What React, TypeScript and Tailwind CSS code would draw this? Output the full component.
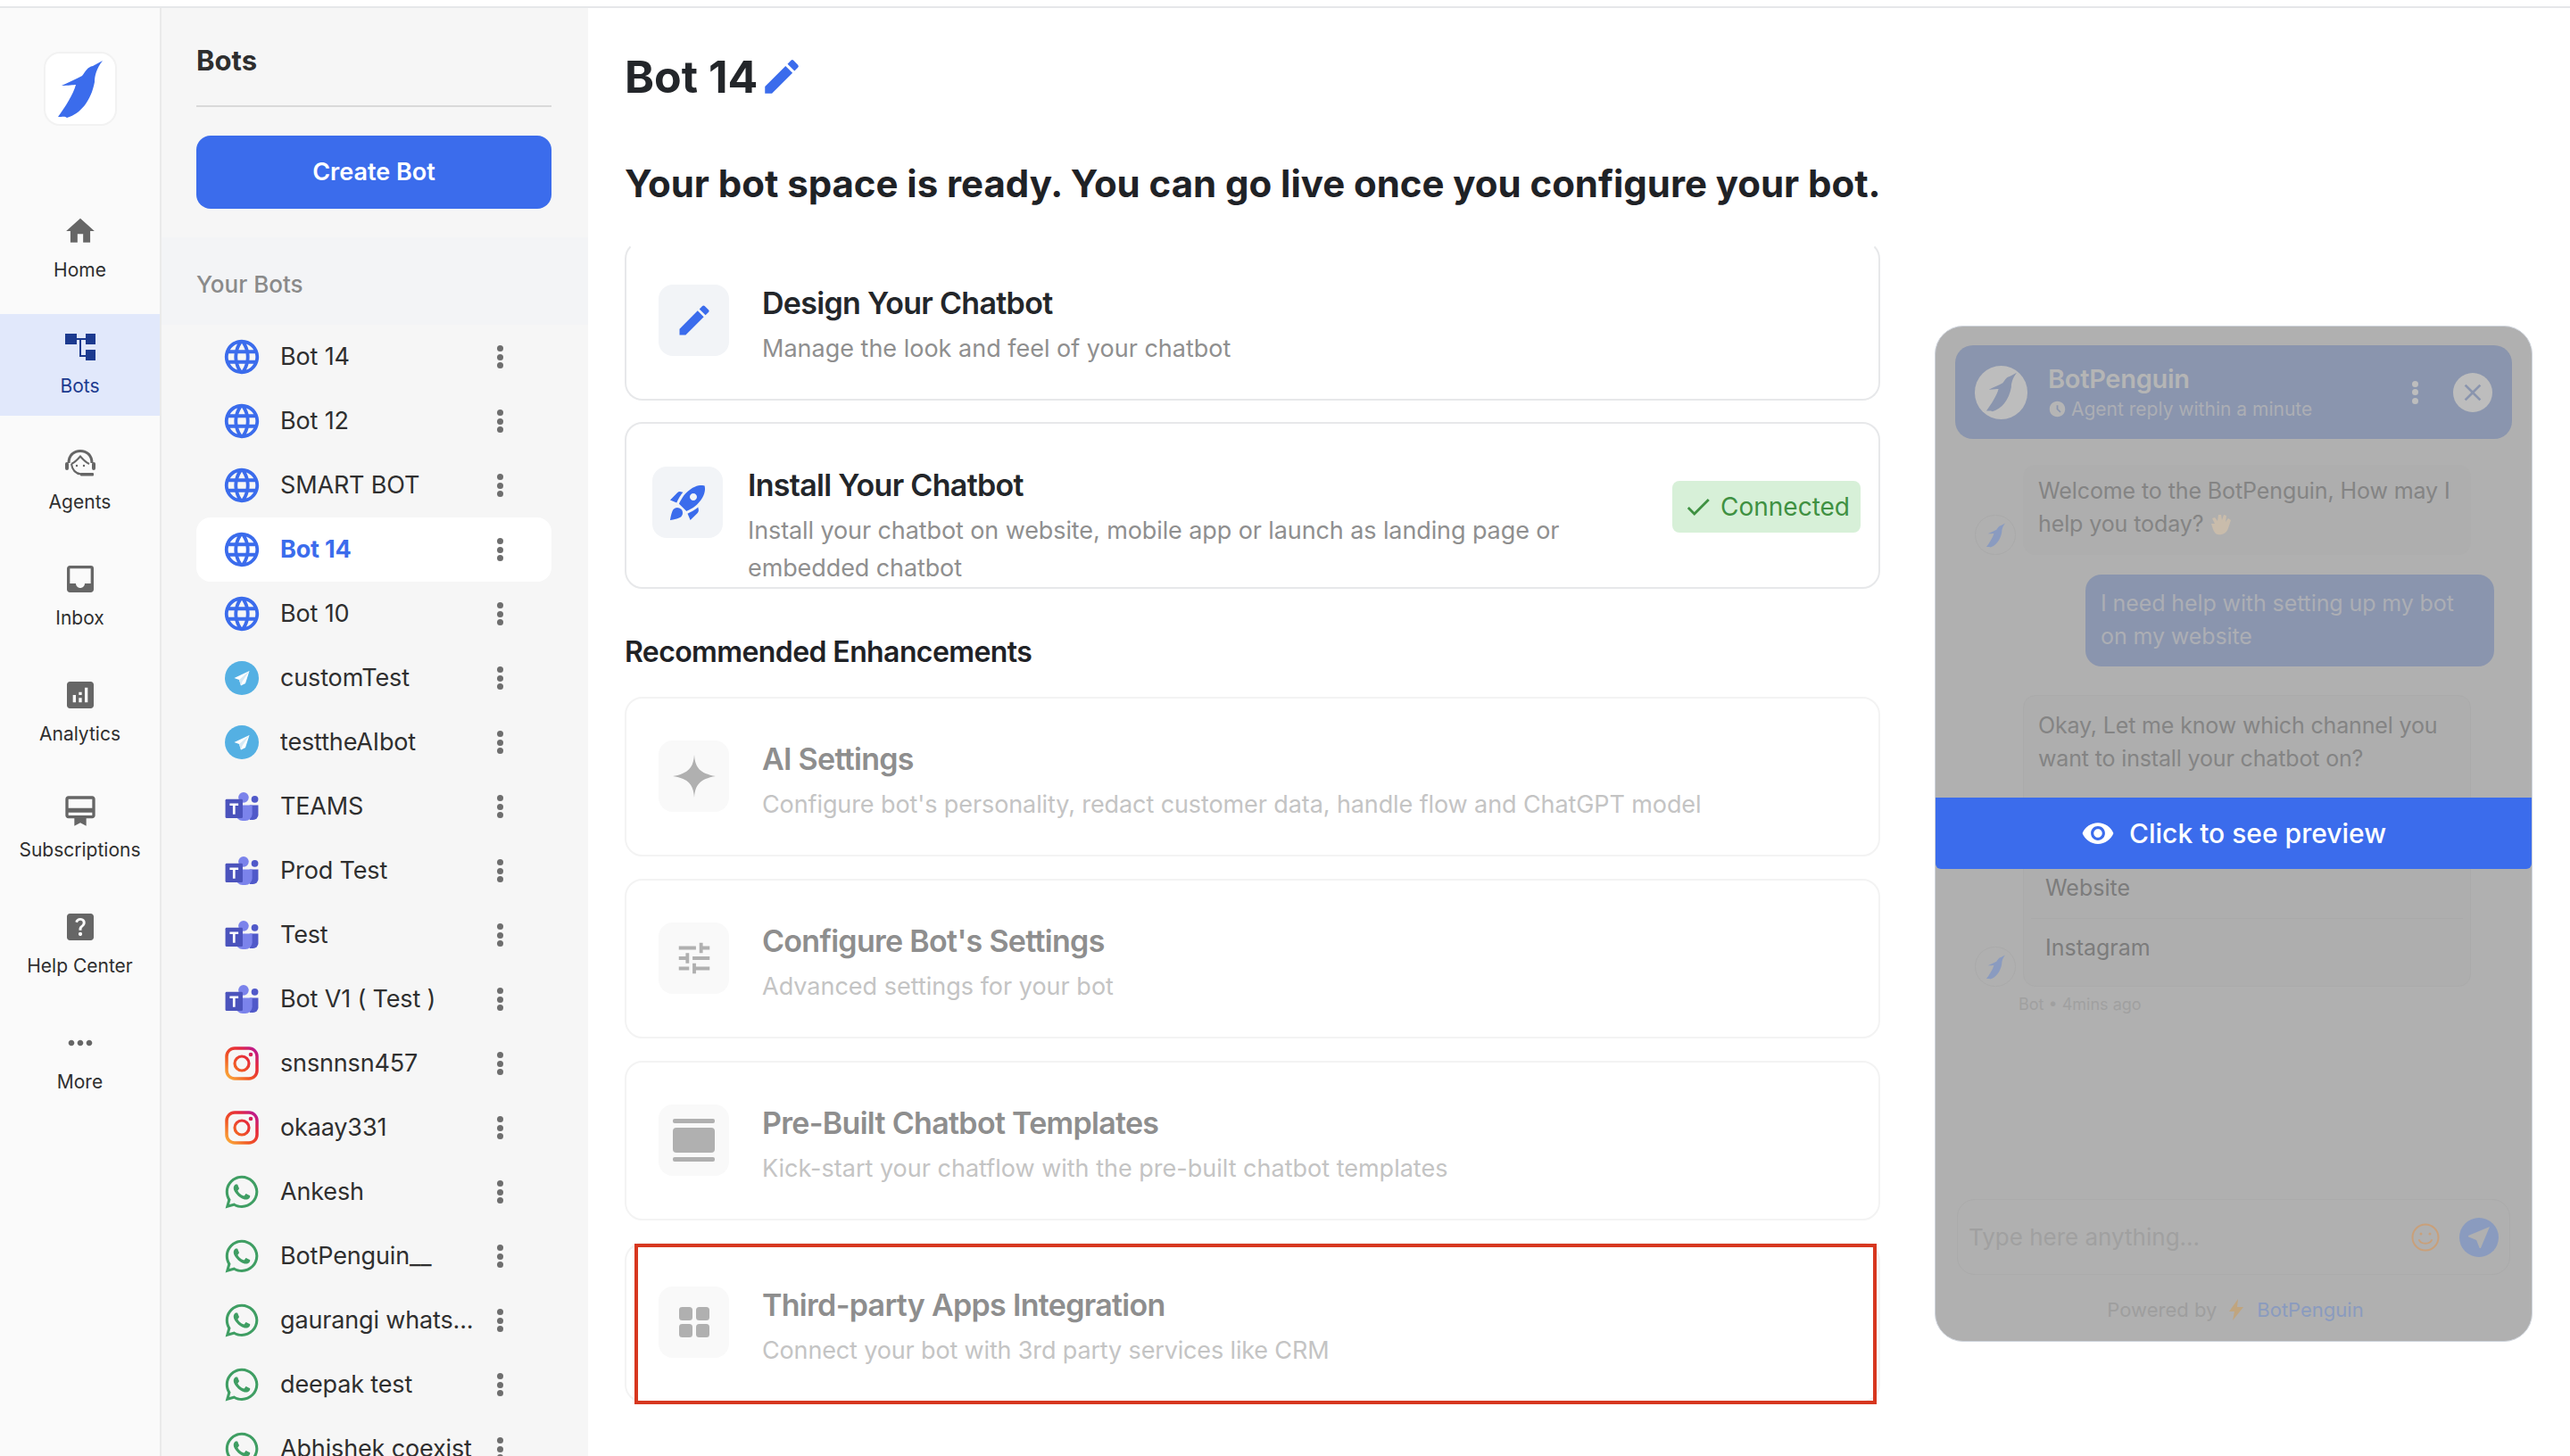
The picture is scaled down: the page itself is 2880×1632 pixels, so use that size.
import React from "react";
import {
  MdHome, MdInbox, MdAnalytics, MdCardMembership, MdHelpCenter, MdMoreHoriz, MdEdit, MdRocketLaunch,
  MdLanguage, MdTune, MdCheck, MdVisibility, MdAccessTimeFilled, MdNearMe, MdClose,
} from "react-icons/md";
import { FaWhatsapp } from "react-icons/fa";

const PENGUIN = "M50 0 L39 6 C33 7 31 12 27 17 C20 21 12 24 4 28 C12 28 17 27 20 27 C17 38 8 52 0 63 C5 63 8 62 10 64 C25 60 37 45 41 24 C41 17 43 9 50 0 Z";

function Penguin({ className, fill }: { className: string; fill: string }) {
  return (
    <svg viewBox="0 0 50 64" className={className}>
      <path d={PENGUIN} fill={fill} />
    </svg>
  );
}

function Dots({ className }: { className: string }) {
  return (
    <div className="flex flex-col items-center gap-[2.5px]">
      <span className={className} />
      <span className={className} />
      <span className={className} />
    </div>
  );
}

function BotsIcon() {
  return (
    <svg viewBox="0 0 34 30" className="h-[30px] w-[34px]" fill="#1c3a8f">
      <rect x="0" y="0" width="13" height="12" />
      <rect x="23" y="0" width="11" height="12" />
      <rect x="23" y="18" width="11" height="12" />
      <path d="M13 5h10v2H13zM16 5h2v19h5v2h-7z" />
    </svg>
  );
}

function AgentsIcon() {
  return (
    <svg viewBox="0 0 34 30" className="h-[30px] w-[34px]" fill="none" stroke="#666">
      <path d="M4 15C4 6 10 1.500 17 1.500S30 6 30 15" strokeWidth="3" />
      <path d="M7 16C11 14 14 11 17 7.500C20 11 23 14 27 16" strokeWidth="2" />
      <path d="M7 16C8 23 12 27 18 27.500" strokeWidth="2" />
      <rect x="0" y="14" width="4" height="9" rx="2" fill="#666" stroke="none" />
      <rect x="30" y="14" width="4" height="9" rx="2" fill="#666" stroke="none" />
      <rect x="17" y="26" width="15" height="3.500" rx="1" fill="#666" stroke="none" />
      <circle cx="13" cy="18" r="1.200" fill="#666" stroke="none" />
      <circle cx="21" cy="18" r="1.200" fill="#666" stroke="none" />
    </svg>
  );
}

function Telegram() {
  return (
    <svg viewBox="0 0 38 38" className="h-[38px] w-[38px]">
      <circle cx="19" cy="19" r="19" fill="#54b0e3" />
      <path d="M27.500 11 L10.500 19 L16 21 L18 27.500 L23 25 Z" fill="#fff" />
      <path d="M27.500 11 L16 21 L18 27.500 L19.500 23 Z" fill="#d5e9f5" />
    </svg>
  );
}

function Teams() {
  return (
    <svg viewBox="0 0 38 34" className="h-[33px] w-[38px]">
      <circle cx="34" cy="8" r="4" fill="#5059c9" />
      <path d="M28 15h10v11a6 6 0 0 1-6 6h-4z" fill="#5059c9" />
      <circle cx="21" cy="6" r="6" fill="#7b83eb" />
      <path d="M12 15h19v10a8 8 0 0 1-8 8 h-3a8 8 0 0 1-8-8z" fill="#7b83eb" />
      <rect x="0" y="8" width="20" height="22" rx="1.500" fill="#4b53bc" />
      <path d="M5 13h10v2.500h-3.600v10h-2.800v-10H5z" fill="#fff" />
    </svg>
  );
}

function Instagram() {
  return (
    <svg viewBox="0 0 38 38" className="h-[38px] w-[38px]">
      <defs>
        <linearGradient id="ig" gradientUnits="userSpaceOnUse" x1="2" y1="36" x2="36" y2="2">
          <stop offset="0" stopColor="#fbb03b" />
          <stop offset="0.35" stopColor="#f15a24" />
          <stop offset="0.7" stopColor="#e5283b" />
          <stop offset="1" stopColor="#b5179e" />
        </linearGradient>
      </defs>
      <rect x="2" y="2" width="34" height="34" rx="9" fill="none" stroke="url(#ig)" strokeWidth="3.500" />
      <circle cx="19" cy="19" r="8" fill="none" stroke="url(#ig)" strokeWidth="3.200" />
      <circle cx="29" cy="9" r="2.300" fill="url(#ig)" />
    </svg>
  );
}

function ChannelIcon({ kind }: { kind: string }) {
  if (kind === "web") return <MdLanguage size={46} color="#3b6cec" className="shrink-0" />;
  if (kind === "tg") return <Telegram />;
  if (kind === "teams") return <Teams />;
  if (kind === "ig") return <Instagram />;
  return <FaWhatsapp size={42} color="#3f9e63" className="shrink-0" />;
}

const nav = [
  { label: "Home", icon: <MdHome size={38} color="#666" /> },
  { label: "Bots", icon: <BotsIcon />, active: true },
  { label: "Agents", icon: <AgentsIcon /> },
  { label: "Inbox", icon: <MdInbox size={40} color="#666" /> },
  { label: "Analytics", icon: <MdAnalytics size={40} color="#666" /> },
  { label: "Subscriptions", icon: <MdCardMembership size={40} color="#666" /> },
  { label: "Help Center", icon: <MdHelpCenter size={40} color="#666" /> },
  { label: "More", icon: <MdMoreHoriz size={40} color="#666" /> },
];

const bots = [
  ["Bot 14", "web"], ["Bot 12", "web"], ["SMART BOT", "web"], ["Bot 14", "web", "active"], ["Bot 10", "web"],
  ["customTest", "tg"], ["testtheAIbot", "tg"], ["TEAMS", "teams"], ["Prod Test", "teams"], ["Test", "teams"],
  ["Bot V1 ( Test )", "teams"], ["snsnnsn457", "ig"], ["okaay331", "ig"], ["Ankesh", "wa"], ["BotPenguin__", "wa"],
  ["gaurangi whats...", "wa"], ["deepak test", "wa"], ["Abhishek coexist", "wa"],
];

function Tile({ children, muted, className }: { children: React.ReactNode; muted?: boolean; className?: string }) {
  return (
    <div className={`flex h-20 w-[79px] shrink-0 items-center justify-center rounded-2xl ${muted ? "bg-[#f9f9f9]" : "bg-[#f2f4f7]"} ${className ?? ""}`}>
      {children}
    </div>
  );
}

function Enhancement({ icon, title, sub, subClass, children }: { icon: React.ReactNode; title: string; sub: string; subClass?: string; children?: React.ReactNode }) {
  return (
    <div className="relative flex h-[179px] gap-[37px] rounded-[20px] border-2 border-[#f3f3f3] pl-[36px] pt-[47px]">
      <Tile muted>{icon}</Tile>
      <div>
        <div className="h-[42px] text-[34px] font-semibold leading-[42px] tracking-[-0.7px] text-[#8e8e8e]">{title}</div>
        <div className={`mt-[9px] h-[42px] text-[27px] leading-[42px] text-[#c4c4c4] ${subClass ?? ""}`}>{sub}</div>
      </div>
      {children}
    </div>
  );
}

function Option({ label }: { label: string }) {
  return <div className="flex h-[66px] items-center pl-[24px] text-[25px] text-[#7c7c7c]">{label}</div>;
}

function MiniAvatar() {
  return (
    <div className="flex h-[45px] w-[46px] shrink-0 items-center justify-center rounded-full border border-[#aaaaaa]">
      <Penguin className="h-[28px] w-[21px]" fill="#8a9bc0" />
    </div>
  );
}

export default function App() {
  return (
    <div className="flex h-[1632px] w-[2880px] flex-col overflow-hidden bg-white font-['Inter',sans-serif] text-[#2f2f2f]">
      <div className="h-[9px] shrink-0 border-b-2 border-[#e6e7e9]" />
      <div className="flex min-h-0 flex-1">
        <aside className="w-[181px] shrink-0 border-r-[2px] border-[#eaeaea] bg-[#fafafa] pt-[49px]">
          <div className="ml-[49px] flex h-[83px] w-[82px] items-center justify-center rounded-[18px] border-2 border-[#f2f2f2] bg-white">
            <Penguin className="h-[64px] w-[50px]" fill="#3b6cec" />
          </div>
          <nav className="mt-[81px] flex flex-col gap-4">
            {nav.map((n) => (
              <div key={n.label} className={`flex h-[114px] flex-col items-center pt-[17px] ${n.active ? "bg-[#e1e8fb] text-[#1c3a8f]" : ""}`}>
                <div className="flex h-10 items-center justify-center">{n.icon}</div>
                <div className="mt-[10px] whitespace-nowrap text-[21px] leading-7">{n.label}</div>
              </div>
            ))}
          </nav>
        </aside>

        <section className="w-[478px] shrink-0 overflow-hidden bg-[#f6f6f6]">
          <div className="pl-[39px] pr-[41px] pt-[39px]">
            <div className="h-10 text-[31px] font-bold leading-10 text-[#2e2e2e]">Bots</div>
            <div className="mt-[30px] h-0.5 bg-[#d9d9d9]" />
            <button className="mt-8 flex h-[82px] w-full items-center justify-center rounded-2xl bg-[#3b6cec] text-[27px] font-semibold text-white">Create Bot</button>
          </div>
          <div className="mt-8 h-[98px] bg-[#f3f4f6] pl-[39px] pt-[37px] text-[26px] font-medium leading-8 text-[#8a8a8a]">Your Bots</div>
          <div className="mr-[41px] ml-[39px]">
            {bots.map(([name, kind, active], i) => (
              <div key={i} className={`flex h-[72px] items-center rounded-2xl pl-[32px] pr-[46px] ${active ? "bg-white" : ""}`}>
                <div className="flex h-[46px] w-[38px] shrink-0 items-center justify-center">
                  <ChannelIcon kind={kind} />
                </div>
                <div className={`ml-6 flex-1 whitespace-nowrap text-[27px] tracking-[-0.15px] ${active ? "font-bold text-[#3b6cec]" : ""}`}>{name}</div>
                <div className="flex w-6 justify-center">
                  <Dots className="h-[7px] w-[7px] rounded-full bg-[#6e6e6e]" />
                </div>
              </div>
            ))}
          </div>
        </section>

        <main className="w-[1448px] shrink-0 pl-[41px] pt-[47px]">
          <div className="flex h-[60px] items-center gap-[2px]">
            <span className="text-[50px] font-bold leading-[60px] text-[#23262a]">Bot 14</span>
            <MdEdit size={50} color="#3b6cec" />
          </div>
          <h1 className="mt-[62px] h-14 whitespace-nowrap text-[42px] font-bold leading-[56px] tracking-[-0.05px] text-[#1f2226]">Your bot space is ready. You can go live once you configure your bot.</h1>
          <div className="mt-[36px] flex h-[179px] gap-[37px] rounded-[20px] border-2 border-[#e7e8ea] border-t-transparent pl-[36px] pt-[47px]">
            <Tile><MdEdit size={44} color="#3b6cec" /></Tile>
            <div>
              <div className="h-[42px] text-[34px] font-semibold leading-[42px] tracking-[-0.7px] text-[#23262a]">Design Your Chatbot</div>
              <div className="mt-[9px] h-[42px] text-[27px] leading-[42px] text-[#8f8f8f]">Manage the look and feel of your chatbot</div>
            </div>
          </div>
          <div className="mt-6 flex h-[187px] overflow-hidden rounded-[20px] border-2 border-[#e7e8ea] pl-[29px] pt-[48px]">
            <Tile><MdRocketLaunch size={48} color="#3b6cec" /></Tile>
            <div className="ml-[28px] w-[1010px]">
              <div className="h-[42px] text-[34px] font-semibold leading-[42px] tracking-[-0.7px] text-[#23262a]">Install Your Chatbot</div>
              <div className="mt-[9px] text-[27px] leading-[42px] tracking-[-0.1px] text-[#8f8f8f]">Install your chatbot on website, mobile app or launch as landing page or<br />embedded chatbot</div>
            </div>
            <div className="mr-[20px] ml-auto mt-[16px] flex h-[58px] w-[211px] items-center justify-center gap-2 rounded-lg bg-[#d7f0d8] text-[28px] text-[#3f9142]">
              <MdCheck size={34} color="#3f9142" />
              <span>Connected</span>
            </div>
          </div>
          <h2 className="mt-[51px] h-10 text-[32px] font-semibold leading-10 tracking-[-0.6px] text-[#1f2226]">Recommended Enhancements</h2>
          <div className="mt-[30px] flex flex-col gap-[25px]">
            <Enhancement
              title="AI Settings"
              sub="Configure bot's personality, redact customer data, handle flow and ChatGPT model"
              subClass="tracking-[-0.1px]"
              icon={<svg viewBox="0 0 48 48" className="h-12 w-12"><path d="M24 0C25 14 30 21 48 24C30 27 25 34 24 48C23 34 18 27 0 24C18 21 23 14 24 0Z" fill="#b0b0b0" /></svg>}
            />
            <Enhancement title="Configure Bot's Settings" sub="Advanced settings for your bot" icon={<MdTune size={46} color="#b0b0b0" />} />
            <Enhancement
              title="Pre-Built Chatbot Templates"
              sub="Kick-start your chatflow with the pre-built chatbot templates"
              icon={<svg viewBox="0 0 47 48" className="h-12 w-[47px]" fill="#b0b0b0"><rect x="0" y="0" width="47" height="5" rx="2" /><rect x="0" y="10" width="47" height="28" rx="4" /><rect x="0" y="43" width="47" height="5" rx="2" /></svg>}
            />
            <Enhancement
              title="Third-party Apps Integration"
              sub="Connect your bot with 3rd party services like CRM"
              subClass="tracking-[-0.15px]"
              icon={<svg viewBox="0 0 34 34" className="h-[34px] w-[34px]" fill="#b0b0b0"><rect x="0" y="0" width="15" height="15" rx="3.500" /><rect x="19" y="0" width="15" height="15" rx="3.500" /><rect x="0" y="19" width="15" height="15" rx="3.500" /><rect x="19" y="19" width="15" height="15" rx="3.500" /></svg>}
            >
              <div className="absolute -bottom-[4px] left-[9px] right-[2px] -top-[1px] border-4 border-[#d7371f]" />
            </Enhancement>
          </div>
        </main>

        <aside className="relative ml-[61px] mt-[356px] flex h-[1139px] w-[670px] shrink-0 flex-col rounded-[32px] border-[1.5px] border-[#cfd4dc] bg-[#b0b0b0]">
          <div className="mx-[22px] mt-[21px] flex h-[105px] shrink-0 items-center rounded-[20px] bg-[#8a95ae] pl-[22px] pr-[22px]">
            <div className="flex h-[60px] w-[59px] items-center justify-center rounded-full bg-[#bdbdbd]">
              <Penguin className="h-[45px] w-[34px]" fill="#8a95ae" />
            </div>
            <div className="ml-[23px]">
              <div className="text-[29px] font-semibold leading-9 tracking-[-0.3px] text-[#b5b5b5]">BotPenguin</div>
              <div className="mt-[2px] flex items-center gap-[5px] text-[21px] leading-7 text-[#acaeb4]">
                <MdAccessTimeFilled size={21} color="#b5b5b5" />
                <span>Agent reply within a minute</span>
              </div>
            </div>
            <div className="ml-auto mr-[39px]">
              <Dots className="h-[7px] w-[7px] rounded-full bg-[#bdbdbd]" />
            </div>
            <div className="flex h-11 w-11 items-center justify-center rounded-full bg-[#bdbdbd]">
              <MdClose size={32} color="#8a95ae" />
            </div>
          </div>

          <div className="ml-[44px] mt-[29px] flex items-end gap-2">
            <MiniAvatar />
            <div className="h-[101px] w-[502px] rounded-[14px] bg-[#aeaeae] pl-[17px] pr-[18px] pt-[11px] text-[25px] leading-[37px] tracking-[-0.1px] text-[#848484]">
              Welcome to the BotPenguin, How may I<br />
              <span className="inline-flex items-center gap-2">help you today?
                <svg viewBox="0 0 27 26" className="h-[26px] w-[27px]"><path d="M5 12L2 6l3-1 3 4 1-7 3 0 1 6 2-6 3 1-1 7 3-4 3 2-3 9c-2 6-7 8-12 7-4-1-5-6-7-12z" fill="#c9bcab" /></svg>
              </span>
            </div>
          </div>
          <div className="ml-[168px] mt-[22px] h-[103px] w-[458px] rounded-[18px] bg-[#8a95ae] pl-[17px] pr-[18px] pt-[14px] text-[25px] leading-[37px] tracking-[-0.1px] text-[#acaeb4]">
            I need help with setting up my bot<br />on my website
          </div>
          <div className="ml-[44px] mt-[32px] flex items-end gap-2">
            <MiniAvatar />
            <div className="h-[327px] w-[502px] rounded-[14px] border border-[#ababab] bg-[#aeaeae]">
              <div className="pl-[16px] pr-[18px] pt-[15px] text-[25px] leading-[37px] tracking-[-0.15px] text-[#848484]">
                Okay, Let me know which channel you<br />want to install your chatbot on?
              </div>
              <div className="mt-[94px]">
                <Option label="Website" />
                <div className="mx-2 h-px bg-[#a9a9a9]" />
                <Option label="Instagram" />
              </div>
            </div>
          </div>
          <div className="ml-[93px] mt-[8px] text-[18px] leading-6 text-[#a0a0a0]">Bot • 4mins ago</div>

          <div className="mx-[24px] mt-auto flex h-[85px] shrink-0 items-center rounded-[20px] border border-[#ababab] pl-[12px] pr-[12px] text-[26px] text-[#a0a0a0]">
            <span>Type here anything...</span>
            <svg viewBox="0 0 32 32" className="ml-auto h-[32px] w-[32px]" fill="none" stroke="#c9a07a" strokeWidth="2">
              <circle cx="16" cy="16" r="14.500" />
              <path d="M9 19c2 5 12 5 14 0" strokeLinecap="round" />
              <circle cx="11" cy="12" r="1.500" fill="#c9a07a" stroke="none" />
              <circle cx="21" cy="12" r="1.500" fill="#c9a07a" stroke="none" />
            </svg>
            <div className="ml-[22px] flex h-11 w-11 items-center justify-center rounded-full bg-[#8a9bbf]">
              <MdNearMe size={32} color="#b0b0b0" />
            </div>
          </div>
          <div className="mb-[20px] mt-[24px] flex h-[30px] shrink-0 items-center justify-center pl-[4px] text-[22px] text-[#9e9e9e]">
            <span>Powered by</span>
            <svg viewBox="0 0 16 24" className="ml-[14px] h-[24px] w-[16px]"><path d="M10 0L0 14h6l-2 10L16 9h-7z" fill="#c0a57f" /></svg>
            <span className="ml-[15px] text-[#8a9bbf]">BotPenguin</span>
          </div>

          <div className="absolute left-0 right-0 top-[528px] flex h-[80px] items-center justify-center gap-[16px] rounded-b-md bg-[#3b6cec] text-[30px] font-medium text-white">
            <MdVisibility size={38} color="#fff" />
            <span>Click to see preview</span>
          </div>
        </aside>
      </div>
    </div>
  );
}
